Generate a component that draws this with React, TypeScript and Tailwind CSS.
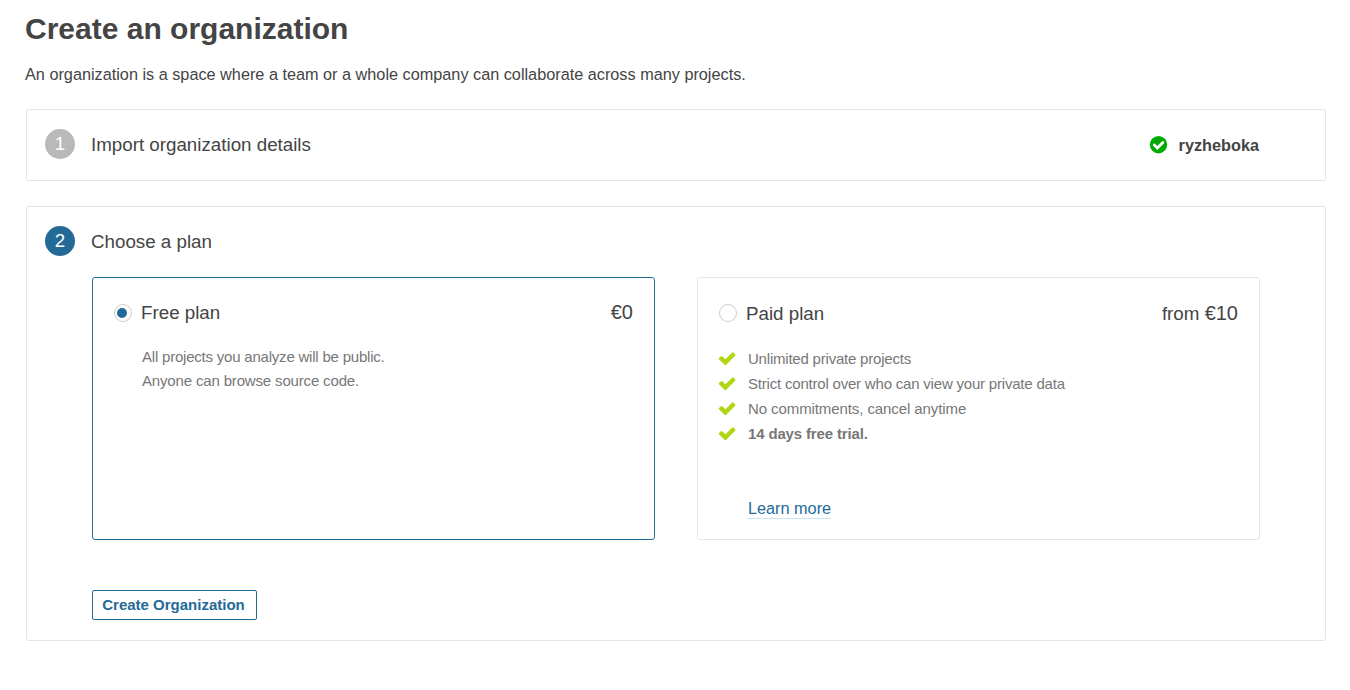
import React from "react";

function Radio({ checked }: { checked?: boolean }) {
  return (
    <span className="flex size-[18px] shrink-0 items-center justify-center rounded-full border border-[#cdcdcd] bg-white">
      {checked && <span className="mr-[2px] size-[10px] rounded-full bg-[#236a97]" />}
    </span>
  );
}

function Check() {
  return (
    <svg className="-ml-px h-[14px] w-[18px] shrink-0" viewBox="0 0 18 14" aria-hidden="true">
      <path
        d="M.9 7.2Q.4 6.6 1 6L3 4.2Q3.6 3.7 4.2 4.2L7.4 7.3 14.3.6Q14.9 0 15.5.6L17.3 2.4Q17.9 3 17.3 3.6L8 12.9Q7.4 13.5 6.8 12.9Z"
        fill="#b0d513"
      />
    </svg>
  );
}

function StepNumber({ value, active }: { value: number; active?: boolean }) {
  return (
    <span
      className={
        active
          ? "flex size-[30px] items-center justify-center rounded-full bg-[#236a97] text-[18.75px] text-white"
          : "flex size-[30px] items-center justify-center rounded-full bg-[#b9b9b9] text-[18.75px] text-white"
      }
    >
      {value}
    </span>
  );
}

const features = [
  { text: "Unlimited private projects", style: "ml-3 tracking-[-0.21px]" },
  { text: "Strict control over who can view your private data", style: "ml-3 tracking-[-0.2px]" },
  { text: "No commitments, cancel anytime", style: "ml-3 tracking-[-0.09px]" },
  { text: "14 days free trial.", style: "ml-3 font-bold tracking-[-0.15px]" },
];

export default function App() {
  return (
    <main className="h-[690px] overflow-hidden bg-white pl-[25px] pr-6 font-['Liberation_Sans',Arial,sans-serif] text-[16.25px] text-[#444]">
      <h1 className="pt-[9px] text-[30px] leading-[40px] font-bold">Create an organization</h1>
      <p className="mt-[15px] h-[20px] leading-[20px] whitespace-nowrap">
        An organization is a space where a team or a whole company can collaborate across many projects.
      </p>

      <section className="mt-[25px] ml-px flex h-[72px] items-start rounded-[2px] border border-[#e6e6e6] pt-[19px] pr-[66px] pl-[18px]">
        <StepNumber value={1} />
        <h2 className="ml-4 text-[18.75px] leading-[31px]">Import organization details</h2>
        <div className="ml-auto flex h-[32px] items-center">
          <svg className="mr-[11px] size-[18px] overflow-visible" viewBox="0 0 18 18" aria-hidden="true">
            <circle cx="8.5" cy="8.7" r="8.7" fill="#00aa00" />
            <path
              d="m4.3 8.9 3.1 3.1 5.4-5.4"
              fill="none"
              stroke="white"
              strokeWidth="2.8"
              strokeLinecap="round"
            />
          </svg>
          <strong className="leading-[34px]">ryzheboka</strong>
        </div>
      </section>

      <section className="mt-[25px] ml-px h-[435px] rounded-[2px] border border-[#e6e6e6] pt-[19px] pr-[65px] pl-[18px]">
        <div className="flex">
          <StepNumber value={2} active />
          <h2 className="ml-4 text-[18.75px] leading-[31px]">Choose a plan</h2>
        </div>

        <div className="mt-[20px] ml-[47px] flex justify-between">
          <article className="h-[263px] w-[563px] rounded-[3px] border border-[#236a97] px-[21px] pt-[23px]">
            <div className="flex h-6 items-center text-[18.75px]">
              <Radio checked />
              <h3 className="ml-[9px]">Free plan</h3>
              <span className="ml-auto pb-0.5 text-[20px]">€0</span>
            </div>
            <p className="mt-[20px] ml-[28px] text-[15px] leading-6 text-[#777]">
              <span className="tracking-[-0.21px]">All projects you analyze will be public.</span>
              <br />
              <span className="tracking-[-0.16px]">Anyone can browse source code.</span>
            </p>
          </article>

          <article className="h-[263px] w-[563px] rounded-[3px] border border-[#e6e6e6] px-[21px] pt-[23px]">
            <div className="flex h-6 items-center text-[18.75px]">
              <Radio />
              <h3 className="ml-[9px] pt-0.5">Paid plan</h3>
              <span className="ml-auto flex items-baseline">
                from&nbsp;<span className="text-[20px]">€10</span>
              </span>
            </div>
            <ul className="mt-[21px] text-[15px] leading-[25px] text-[#777]">
              {features.map((feature) => (
                <li key={feature.text} className="flex h-[25px] items-center">
                  <Check />
                  <span className={feature.style}>{feature.text}</span>
                </li>
              ))}
            </ul>
            <a
              href="#"
              className="mt-[52px] ml-[29px] inline-block h-[21px] border-b border-[#cae3f2] leading-[20px] text-[#236a97]"
            >
              Learn more
            </a>
          </article>
        </div>

        <button
          type="button"
          className="mt-[50px] ml-[47px] flex h-[30px] w-[165px] items-center justify-center rounded-[2px] border border-[#236a97] pr-0.5 text-[15px] font-bold whitespace-nowrap text-[#236a97]"
        >
          Create Organization
        </button>
      </section>
    </main>
  );
}
